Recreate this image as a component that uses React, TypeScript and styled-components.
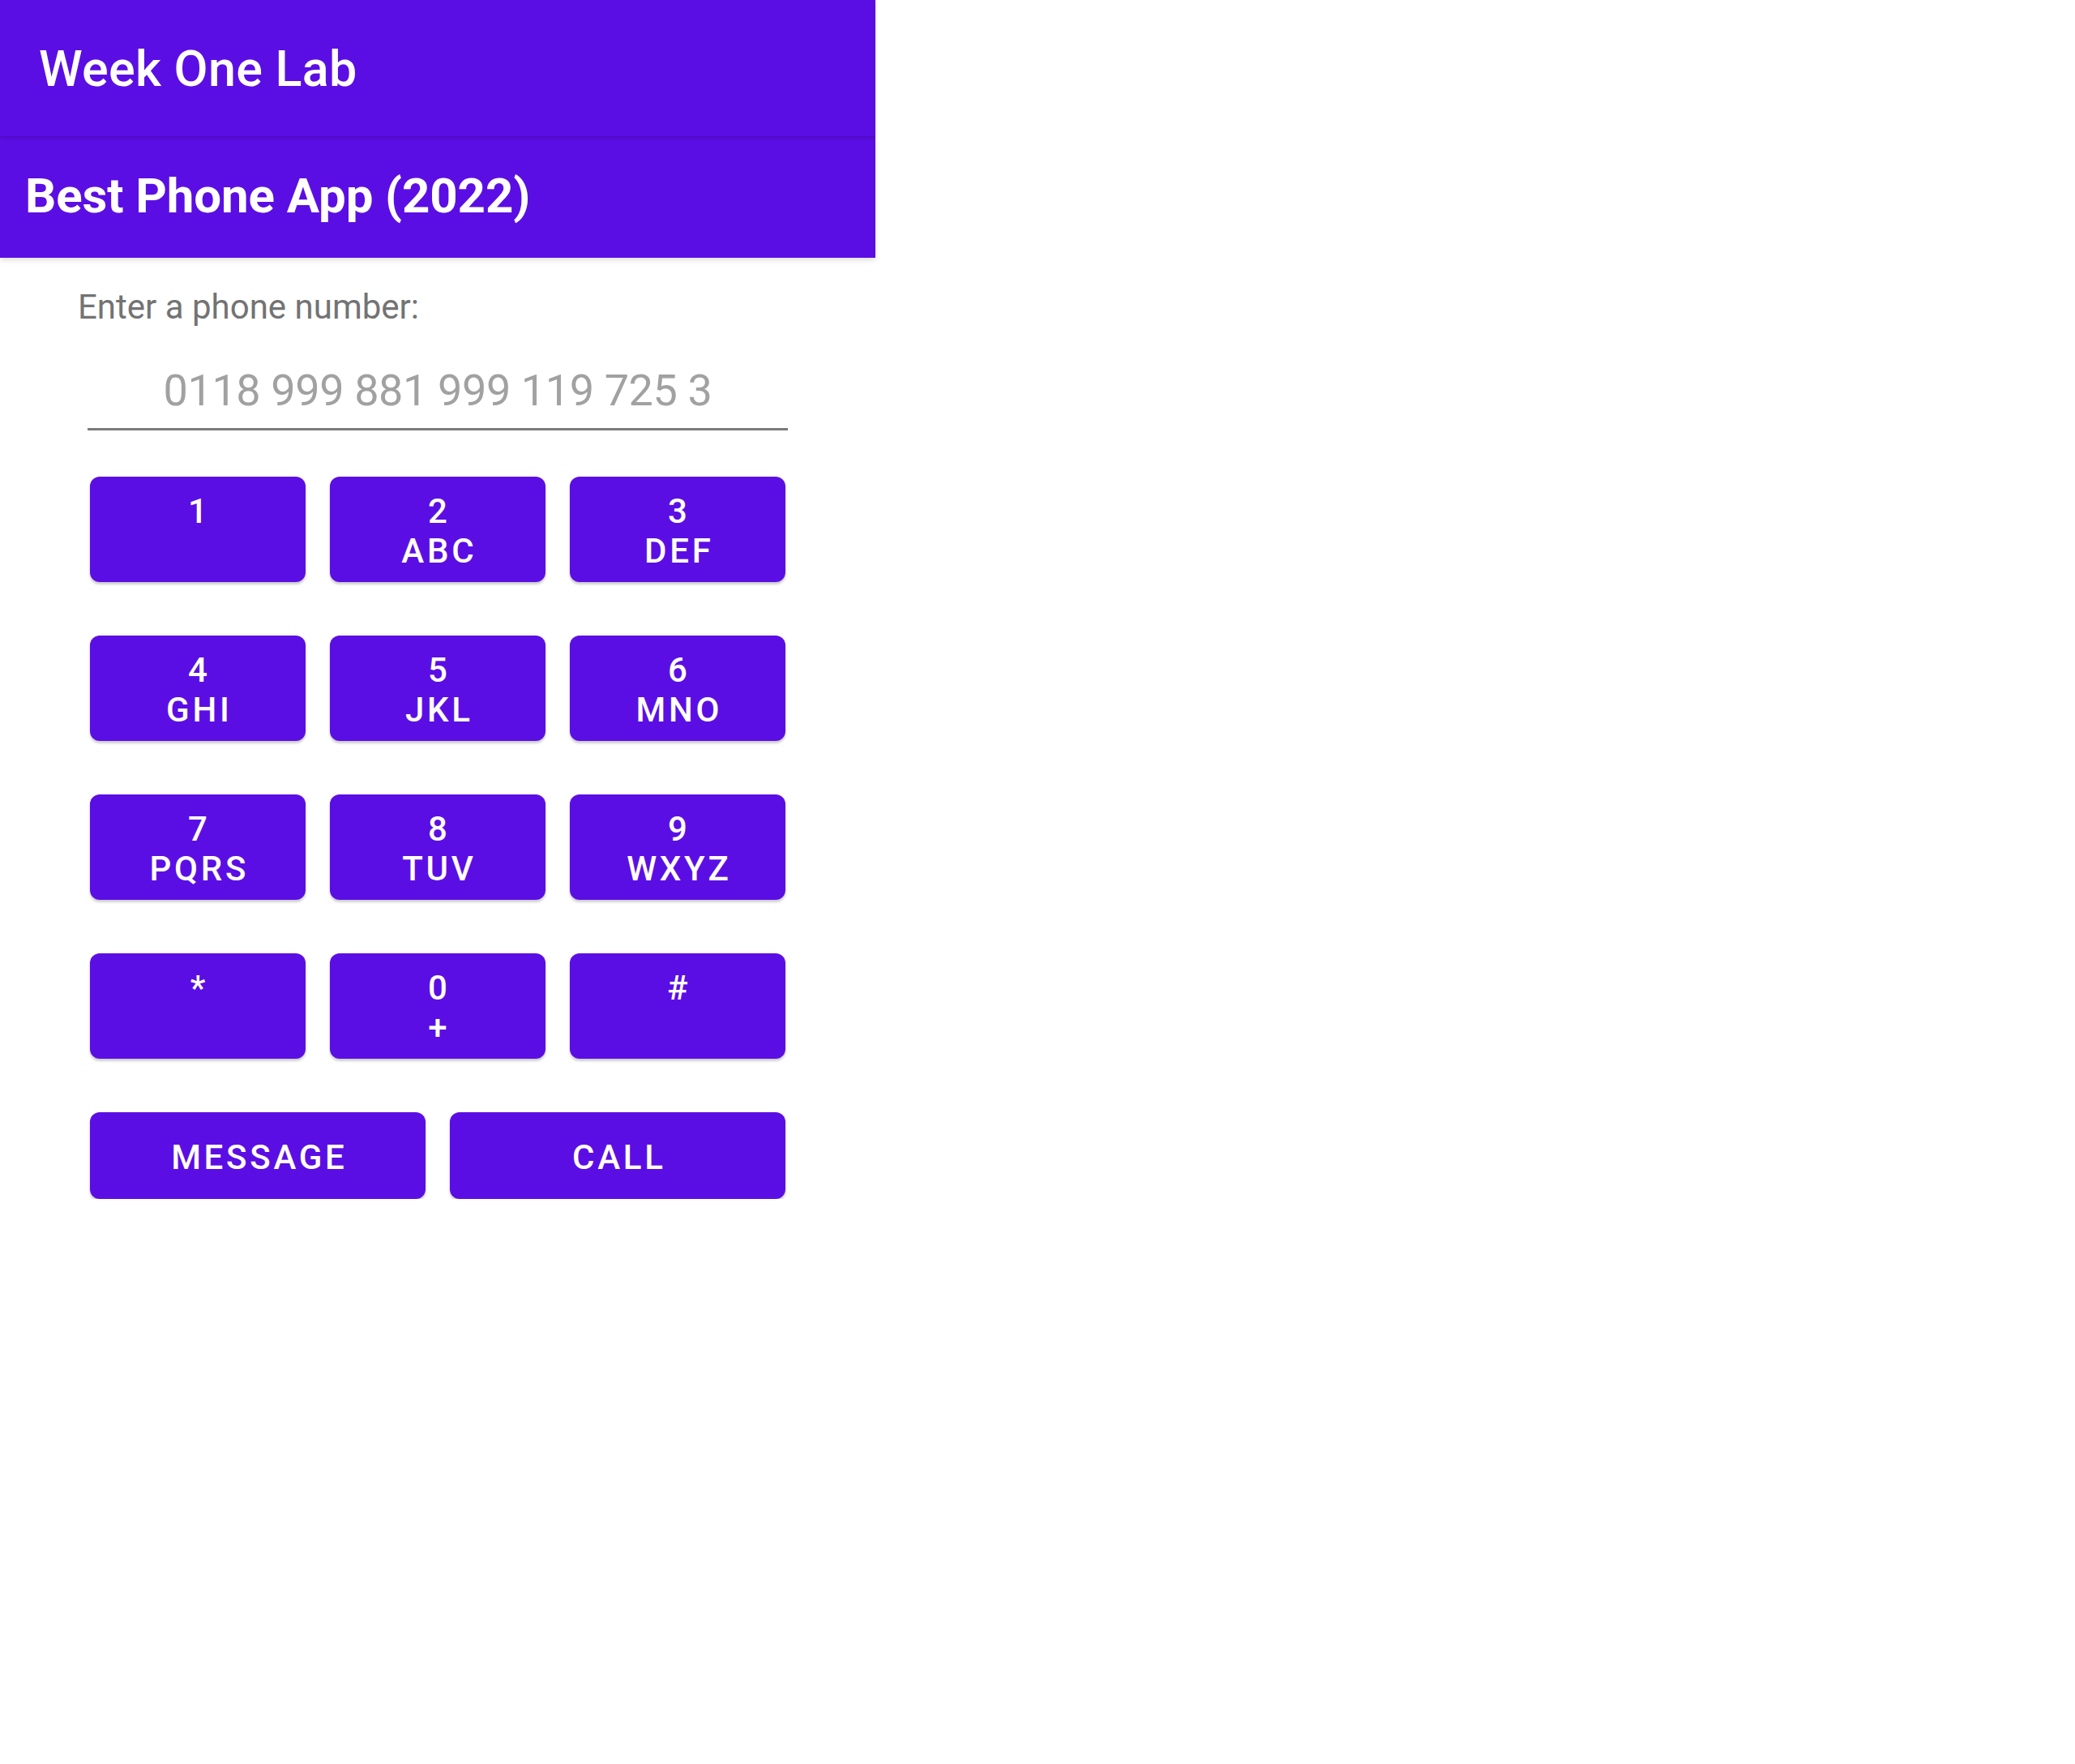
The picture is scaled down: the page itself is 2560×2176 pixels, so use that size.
import React from "react";
import styled, { createGlobalStyle } from "styled-components";

const Global = createGlobalStyle`
  html, body {
    margin: 0;
    padding: 0;
    background: #ffffff;
    font-family: Roboto, "Noto Sans", sans-serif;
  }
  * { box-sizing: border-box; }
`;

const PURPLE = "#5b0ee4";

const Screen = styled.div`
  width: 1080px;
  display: flex;
  flex-direction: column;
`;

const AppBar = styled.header`
  height: 168px;
  background: ${PURPLE};
  display: flex;
  align-items: center;
  padding-left: 48px;
  position: relative;
  z-index: 2;
  box-shadow: 0 2px 4px rgba(0, 0, 0, 0.18);
`;

const AppTitle = styled.h1`
  margin: 0;
  padding-top: 2px;
  color: #ffffff;
  font-family: Roboto, sans-serif;
  font-weight: 500;
  font-size: 61px;
  letter-spacing: 0.3px;
`;

const Banner = styled.div`
  height: 150px;
  background: ${PURPLE};
  display: flex;
  align-items: center;
  padding-left: 31px;
  position: relative;
  z-index: 1;
  box-shadow: 0 3px 6px rgba(0, 0, 0, 0.12);
`;

const BannerTitle = styled.h2`
  margin: 0;
  padding-bottom: 3px;
  color: #ffffff;
  font-family: Roboto, sans-serif;
  font-weight: 700;
  font-size: 60px;
  letter-spacing: -0.1px;
`;

const Content = styled.main`
  display: flex;
  flex-direction: column;
  padding: 36px 96px 0;
`;

const Label = styled.label`
  font-family: Roboto, sans-serif;
  font-size: 42px;
  color: #737373;
  line-height: 49px;
`;

const Field = styled.div`
  margin: 47px 12px 0;
  padding-bottom: 15px;
  border-bottom: 3px solid #7b7b7b;
  text-align: center;
`;

const Hint = styled.span`
  font-family: Roboto, sans-serif;
  font-size: 54px;
  line-height: 63px;
  letter-spacing: -0.4px;
  color: #a1a1a1;
  display: block;
`;

const Keypad = styled.div`
  margin: 57px 15px 0;
  display: grid;
  grid-template-columns: repeat(3, 266px);
  grid-auto-rows: 130px;
  column-gap: 30px;
  row-gap: 66px;
`;

const Key = styled.button`
  border: none;
  border-radius: 12px;
  background: ${PURPLE};
  color: #ffffff;
  font-family: Roboto, sans-serif;
  font-weight: 500;
  font-size: 42px;
  line-height: 49px;
  letter-spacing: 3.75px;
  padding: 18px 0 0 3.75px;
  display: flex;
  flex-direction: column;
  align-items: center;
  justify-content: flex-start;
  box-shadow: 0 3px 3px rgba(0, 0, 0, 0.16), 0 1px 4px rgba(0, 0, 0, 0.08);
  cursor: pointer;
`;

const KeyLine = styled.span`
  display: block;
  height: 49px;
`;

const Actions = styled.div`
  margin: 66px 15px 0;
  display: grid;
  grid-template-columns: repeat(2, 414px);
  column-gap: 30px;
`;

const ActionButton = styled.button`
  height: 107px;
  border: none;
  border-radius: 12px;
  background: ${PURPLE};
  color: #ffffff;
  font-family: Roboto, sans-serif;
  font-weight: 500;
  font-size: 42px;
  letter-spacing: 3.75px;
  padding: 3px 0 0 3.75px;
  box-shadow: 0 3px 3px rgba(0, 0, 0, 0.16), 0 1px 4px rgba(0, 0, 0, 0.08);
  cursor: pointer;
`;

const keys: [string, string][] = [
  ["1", ""],
  ["2", "ABC"],
  ["3", "DEF"],
  ["4", "GHI"],
  ["5", "JKL"],
  ["6", "MNO"],
  ["7", "PQRS"],
  ["8", "TUV"],
  ["9", "WXYZ"],
  ["*", ""],
  ["0", "+"],
  ["#", ""],
];

export default function App() {
  return (
    <>
      <Global />
      <Screen>
        <AppBar>
          <AppTitle>Week One Lab</AppTitle>
        </AppBar>
        <Banner>
          <BannerTitle>Best Phone App (2022)</BannerTitle>
        </Banner>
        <Content>
          <Label>Enter a phone number:</Label>
          <Field>
            <Hint>0118 999 881 999 119 725 3</Hint>
          </Field>
          <Keypad>
            {keys.map(([digit, letters]) => (
              <Key key={digit}>
                <KeyLine>{digit}</KeyLine>
                <KeyLine>{letters}</KeyLine>
              </Key>
            ))}
          </Keypad>
          <Actions>
            <ActionButton>MESSAGE</ActionButton>
            <ActionButton>CALL</ActionButton>
          </Actions>
        </Content>
      </Screen>
    </>
  );
}
